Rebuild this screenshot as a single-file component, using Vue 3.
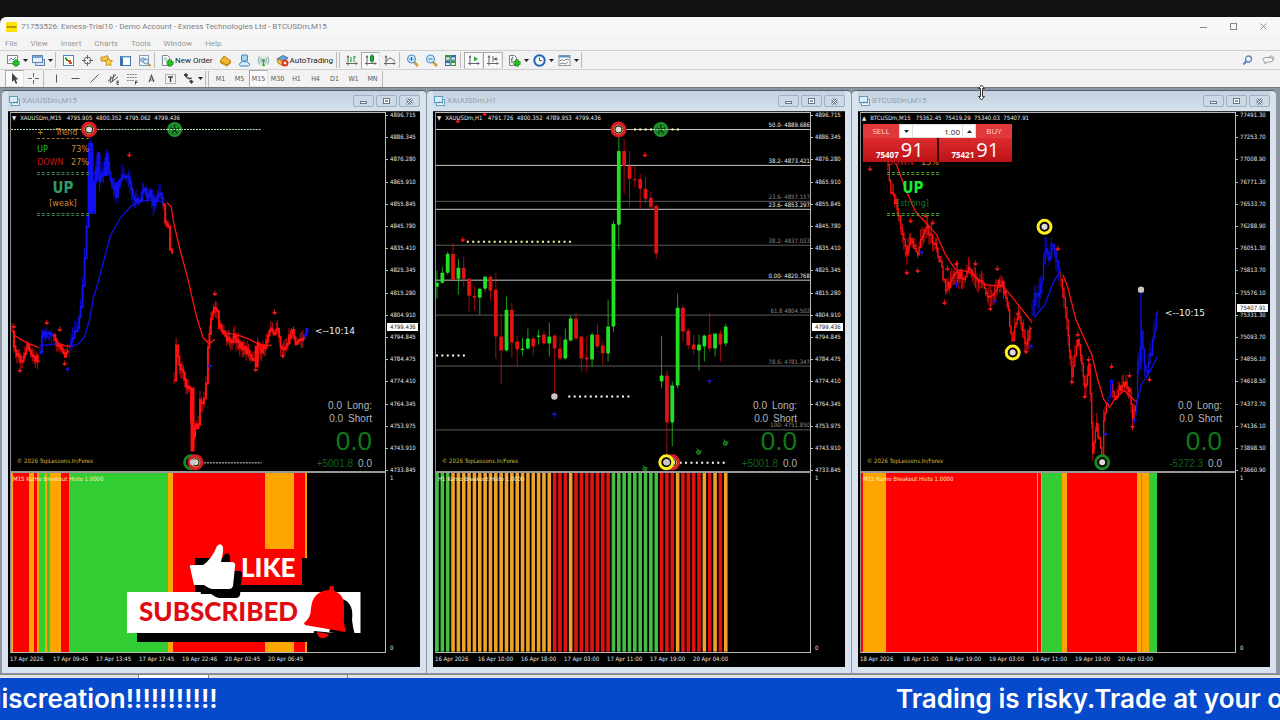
<script setup>
const menus = ['File', 'View', 'Insert', 'Charts', 'Tools', 'Window', 'Help']

const chartAxes = '<path d="M3 2v9.500M1 9.500h11" stroke="#666" fill="none"/><path d="M3 1l-1.500 2.500h3zM13 9.500l-2.500-1.500v3z" fill="#666"/>'
const plus = '<path d="M9 5.500v7M5.500 9h7" stroke="#0c840c" stroke-width="3.500"/><path d="M9 6v6M6 9h6" stroke="#25c225" stroke-width="2"/>'
const icons = {
  newChart: '<rect x=".5" y="1.500" width="10" height="8" fill="#fff" stroke="#7a8794"/><path d="M2 7l2-3 2 2 3-3" stroke="#5f8cc0" fill="none"/>' + plus,
  profiles: '<rect x="3.500" y="5.500" width="9" height="6" fill="#d5e4f4" stroke="#5c84ad"/><rect x=".5" y="1.500" width="10" height="7" fill="#e8f1fa" stroke="#5c84ad"/><path d="M1 3h9" stroke="#76a5d8" stroke-width="2"/>',
  market: '<rect x="1.500" y="1.500" width="10" height="10" fill="#fff" stroke="#4b86bd"/><path d="M3 4.500h2M4 6h2" stroke="#1ba01b" stroke-width="2"/><path d="M6 7h3M7 9h3" stroke="#d34c28" stroke-width="2"/>',
  target: '<circle cx="6.500" cy="6.500" r="3.500" fill="none" stroke="#666"/><path d="M6.500 1v4M6.500 8v4M1 6.500h4M8 6.500h4" stroke="#666"/>',
  navigator: '<path d="M1 3h3l1-1h3v5H1z" fill="#f3c64c" stroke="#c98f1b"/><path d="M8.500 4l1.200 2.500 2.800.3-2 2 .5 3-2.500-1.300L6 11.800l.5-3-2-2 2.800-.3z" fill="#ffd650" stroke="#c98f1b"/>',
  terminal: '<rect x="1.500" y="2.500" width="10" height="9" fill="#fff" stroke="#3b74ad"/><path d="M3 3v8" stroke="#3b74ad" stroke-width="2"/><path d="M2 3h9" stroke="#7fa9d4"/>',
  tester: '<rect x="1.500" y="1.500" width="9" height="10" fill="#f5f9fd" stroke="#7b9cbf"/><path d="M3 8V4M5 9V3M7 7V4" stroke="#4c7fb3"/><circle cx="8" cy="7.500" r="2.500" fill="#d8ecfa" stroke="#6c8cab"/><path d="M10 9.500l2.500 2.500" stroke="#c09a3a" stroke-width="2"/>',
  order: '<path d="M1.500 1.500h5l2 2v8h-7z" fill="#fff" stroke="#7a8794"/><path d="M3 4h3M3 6h4" stroke="#8aa"/>' + plus,
  editor: '<path d="M1 7l4-5 7 5-4 4z" fill="#f0b72f" stroke="#b27c14"/><path d="M1 7l7 4 4-4v2l-4 3.500L1 9z" fill="#c98c1d"/>',
  vps: '<rect x="3.500" y="1" width="6" height="6" rx="1" fill="#a9d6f6" stroke="#3b84c4"/><path d="M2.500 12c-2-.5-1.500-3 .5-3 .5-2 3-2 4-1 2-1 3 0 3 1 2 0 2 2.500.5 3z" fill="#d9edfb" stroke="#3b84c4"/>',
  signal: '<circle cx="6.500" cy="6.500" r="5" fill="#dceedd"/><circle cx="6.500" cy="6.500" r="1.500" fill="#4a8a4a"/><path d="M4.500 4q-2 2.500 0 5M8.500 4q2 2.500 0 5M2.500 2.500q-3 4 0 8M10.500 2.500q3 4 0 8" stroke="#7ba7b5" fill="none"/><path d="M6.500 7l-1.500 5h3z" fill="#39a339"/>',
  auto: '<path d="M1 5l6-3.500L12 4 7 7z" fill="#64a7dd" stroke="#39759f"/><path d="M1 5l6 2v5L2 9z" fill="#f0c049" stroke="#b98b1e"/><circle cx="9" cy="9" r="3.500" fill="#d83b22"/><rect x="7.800" y="7.800" width="2.400" height="2.400" fill="#fff"/>',
  bars: chartAxes + '<path d="M6 3v5M6 7H5M9 2v6M9 3h2" stroke="#18a03a" fill="none"/>',
  candle: chartAxes + '<path d="M8 0v9" stroke="#14802c"/><rect x="6.500" y="2" width="3" height="5" fill="#1fae3b" stroke="#14802c"/>',
  line: chartAxes + '<path d="M3 8q3-5 4.500-4T12 7" stroke="#666" fill="none"/>',
  zoomIn: '<path d="M8 8l4 4" stroke="#cda233" stroke-width="2.500"/><circle cx="5.500" cy="5" r="4" fill="#d3eafa" stroke="#3b88c4"/><path d="M5.500 3v4M3.500 5h4" stroke="#2a74b0"/>',
  zoomOut: '<path d="M8 8l4 4" stroke="#cda233" stroke-width="2.500"/><circle cx="5.500" cy="5" r="4" fill="#d3eafa" stroke="#3b88c4"/><path d="M3.500 5h4" stroke="#2a74b0"/>',
  tile: '<rect x="1" y="1" width="5.500" height="5.500" fill="#3a9a35"/><rect x="6.500" y="1" width="5.500" height="5.500" fill="#2d6db5"/><rect x="1" y="6.500" width="5.500" height="5.500" fill="#2d6db5"/><rect x="6.500" y="6.500" width="5.500" height="5.500" fill="#3a9a35"/><path d="M2 4.500h3.500M7.500 4.500H11M2 10h3.500M7.500 10H11" stroke="#e8f4e8" stroke-width="2"/>',
  scroll: chartAxes + '<path d="M7 2.500v5l4-2.500z" fill="#1fae3b"/>',
  shift: chartAxes + '<path d="M7 2v6M12 5H8" stroke="#666"/><path d="M8 5l2.500-2v4z" fill="#666"/>',
  indicators: '<path d="M1.500 1.500h5l2 2v8h-7z" fill="#e9f3e9" stroke="#7a8794"/><path d="M5 3q-2 1-1 6" stroke="#555" fill="none"/>' + plus,
  clock: '<circle cx="6.500" cy="6.500" r="5.200" fill="#f4f8fc" stroke="#2465b3" stroke-width="2"/><path d="M6.500 3.500v3H9" stroke="#555" fill="none"/>',
  template: '<rect x="1" y="1.500" width="11" height="10" fill="#fff" stroke="#8b98a6"/><path d="M1 2.500h11" stroke="#5f8cc0" stroke-width="2"/><path d="M2 7l2-1.500L6 7l2-2 3 1M2 10l2-1 3 1 3-2" stroke="#77838c" fill="none"/>',
  cursor: '<path d="M4 1v9l2.200-2 1.600 4 1.500-.7L7.700 7.500H10.500z" fill="#444"/>',
  cross: '<path d="M6.500 1v4M6.500 8v4M1 6.500h4M8 6.500h4" stroke="#666"/>',
  vline: '<path d="M6.500 2.500v8" stroke="#555"/>',
  hline: '<path d="M2.500 6.500h8" stroke="#555"/>',
  trend: '<path d="M2.500 10.500l8-8" stroke="#555"/>',
  channel: '<path d="M1 9l8-6M3 11l8-6M4 4l-1 6M7 2L5 10" stroke="#555"/><path d="M12 9h-2v3.500h2M10 10.500h2" stroke="#555" fill="none"/>',
  fibo: '<path d="M1 2.500h10M1 5.500h10M1 8.500h7" stroke="#888" stroke-dasharray="2 .6"/><path d="M11.500 9h-2v3.500M9.500 10.500h2" stroke="#555" fill="none"/>',
  textA: '<path d="M4 10l2.500-6.500L9 10M5 8h3" stroke="#555" stroke-width="1.200" fill="none"/>',
  label: '<rect x="1.500" y="2.500" width="10" height="9" fill="none" stroke="#777" stroke-dasharray="1 1"/><path d="M4 5h5M6.500 5v5" stroke="#444" stroke-width="1.500"/>',
  shapes: '<path d="M2 3l2-1.500L6 3 4 5zM4 5l3 2 3-1" stroke="#444" fill="#444"/><path d="M7 9.500l2-2 2.500 2L9.500 12z" fill="#444"/>',
  search: '<circle cx="7.500" cy="5" r="3" fill="none" stroke="#5b86c8" stroke-width="1.300"/><path d="M5.500 7L2.500 10.500" stroke="#5b86c8" stroke-width="2"/>',
  chat: '<path d="M1 5.500q0-2 3-2h4q3 0 3 2.200T8 8H5L3 10V8Q1 7.500 1 5.500z" fill="#f5f5f5" stroke="#999"/><path d="M7 3q2-2 4-.5t0 4" fill="none" stroke="#aaa"/>',
  child: '<rect x="3.500" y="4.500" width="8" height="6" fill="#eef5fb" stroke="#5f9cc0"/><rect x="1.500" y="1.500" width="8" height="6" fill="#dcecf8" stroke="#5f9cc0"/><path d="M5 7.500h2M8 7.500h2" stroke="#3f86b0" stroke-width="1.500"/>',
}

const toolbar = [
  { icon: 'newChart', drop: true, name: 'New chart' }, { icon: 'profiles', drop: true, name: 'Profiles' }, { sep: 1 },
  { icon: 'market', name: 'Market watch' }, { icon: 'target', name: 'Data window' }, { icon: 'navigator', name: 'Navigator' },
  { icon: 'terminal', name: 'Terminal' }, { icon: 'tester', name: 'Strategy tester' }, { sep: 1 },
  { icon: 'order', label: 'New Order', name: 'New Order' },
  { icon: 'editor', name: 'MetaEditor' }, { icon: 'vps', name: 'VPS' }, { icon: 'signal', name: 'Signals' },
  { icon: 'auto', label: 'AutoTrading', name: 'AutoTrading' }, { sep: 2 },
  { icon: 'bars', name: 'Bar chart' }, { icon: 'candle', on: true, name: 'Candlesticks' }, { icon: 'line', name: 'Line chart' }, { sep: 1 },
  { icon: 'zoomIn', name: 'Zoom in' }, { icon: 'zoomOut', name: 'Zoom out' }, { icon: 'tile', name: 'Tile windows' }, { sep: 1 },
  { icon: 'scroll', on: true, name: 'Auto scroll' }, { icon: 'shift', on: true, name: 'Chart shift' }, { sep: 1 },
  { icon: 'indicators', drop: true, name: 'Indicators' }, { icon: 'clock', drop: true, name: 'Periods' }, { icon: 'template', drop: true, name: 'Templates' }, { sep: 1 },
]
const drawTools = [
  { icon: 'cursor', on: true, name: 'Cursor' }, { icon: 'cross', name: 'Crosshair' }, { sep: 1 },
  { icon: 'vline', name: 'Vertical line' }, { icon: 'hline', name: 'Horizontal line' }, { icon: 'trend', name: 'Trendline' },
  { icon: 'channel', name: 'Channel' }, { icon: 'fibo', name: 'Fibonacci' }, { icon: 'textA', name: 'Text' },
  { icon: 'label', name: 'Text label' }, { icon: 'shapes', drop: true, name: 'Arrows' }, { sep: 2 },
  { text: 'M1' }, { text: 'M5' }, { text: 'M15', on: true }, { text: 'M30' }, { text: 'H1' }, { text: 'H4' },
  { text: 'D1' }, { text: 'W1' }, { text: 'MN' }, { sep: 1 },
]

const RED = '#f11', BLUE = '#1010f0', GREEN = '#22e022', CRED = '#e01212'

// Expands key points into stepped closes plus deterministic wicks.
function series(color, pts, amp, width = 2, step = 1.35) {
  let d = '', wicks = '', k = 0
  for (let i = 0; i < pts.length - 1; i++) {
    const [x0, y0] = pts[i], [x1, y1] = pts[i + 1]
    const n = Math.max(1, Math.round((x1 - x0) / step))
    for (let j = 0; j < n; j++) {
      const t = j / n
      const x = x0 + (x1 - x0) * t
      const noise = Math.sin((x + k) * 12.9) * amp * 0.35
      const y = y0 + (y1 - y0) * t + noise
      d += d ? `H${x.toFixed(1)}V${y.toFixed(1)}` : `M${x.toFixed(1)} ${y.toFixed(1)}`
      const up = Math.abs(Math.sin(k * 7.3 + x)) * amp, down = Math.abs(Math.cos(k * 5.1 + x)) * amp
      wicks += `M${x.toFixed(1)} ${(y - up).toFixed(1)}V${(y + down).toFixed(1)}`
      k++
    }
  }
  const last = pts[pts.length - 1]
  d += `H${last[0]}V${last[1]}`
  return { color, d, wicks, width }
}
const curve = (color, points, width = 1.3) => ({ color, points, width })

const candleData = [
  [271,283,287,299,1],[267,273,283,284,1],[252,254,273,275,1],[243,254,280,281,0],[259,268,279,295,1],[257,268,279,287,0],
  [278,279,296,312,0],[286,296,298,311,0],[288,289,298,315,1],[276,277,289,292,1],[275,277,291,301,0],[273,290,337,359,0],
  [314,337,351,385,0],[297,310,351,352,1],[303,310,343,358,0],[336,342,350,367,0],[338,349,350,356,1],[329,339,349,350,1],
  [337,339,347,356,0],[330,336,337,345,1],[331,335,344,345,0],[323,337,344,357,1],[335,336,349,395,0],[337,349,359,361,0],
  [329,340,359,360,1],[316,319,341,342,1],[313,319,339,341,0],[337,337,359,372,0],[337,358,360,372,0],[333,335,360,367,1],
  [324,335,347,349,0],[341,346,354,365,0],[300,327,354,362,1],[221,224,327,332,1],[137,151,225,250,1],[139,151,166,194,0],
  [151,166,179,207,0],[166,179,180,188,0],[174,179,189,209,0],[177,189,199,204,0],[192,198,207,210,0],[205,206,254,259,0],
  [336,376,382,389,1],[371,376,423,457,0],[382,386,423,447,1],[294,308,386,389,1],[306,308,332,342,0],[329,331,346,350,0],
  [335,345,350,355,0],[335,345,351,371,1],[335,336,347,362,1],[313,335,349,353,0],[334,334,349,357,1],[330,334,345,362,0],[324,327,344,347,1],
]
const pitch = 5.376
const candles = candleData.map(([hi, top, bot, lo, up], i) => ({ x: 436 + i * pitch, hi, top, bot, lo, color: up ? GREEN : CRED }))
const hourCodes = 'GGG' + 'O'.repeat(19) + 'RRRO' + 'R'.repeat(7) + 'G'.repeat(9) + 'RRRORRRRORORO'
const hourColors = { G: '#43bf43', O: '#eea22c', R: '#e01212' }
const hourBars = [...hourCodes].map((c, i) => [434.2 + i * pitch, 437.8 + i * pitch, hourColors[c]])

const O = '#ffa500', G = '#32cd32', R = '#ff0000'
const goldScale = ['4896.715','4886.345','4876.280','4865.910','4855.845','4845.780','4835.410','4825.345','4815.280','4804.910','4794.845','4784.475','4774.410','4764.345','4753.975','4743.910','4733.845']
const btcScale = ['77491.30','77253.70','77008.90','76771.30','76533.70','76288.90','76051.30','75813.70','75576.10','75331.30','75093.70','74856.10','74618.50','74373.70','74136.10','73898.50','73660.90']

const charts = [
  {
    id: 'gold15', title: 'XAUUSDm,M15', x0: 10, arrow: '▼', info: 'XAUUSDm,M15   4795.905  4800.352  4795.062  4799.436',
    scale: goldScale, price: '4799.436', histo: 'M15 Kumo Breakout Histo 1.0000', profit: '+5001.8', timer: '<--10:14', timerClass: 'timer-gold',
    dates: ['17 Apr 2026','17 Apr 09:45','17 Apr 13:45','17 Apr 17:45','19 Apr 22:46','20 Apr 02:45','20 Apr 06:45'],
    bars: [[10,12,O],[12,28,R],[28,33,O],[33,36,R],[36,38,O],[38,44,G],[44,46,O],[46,49,G],[49,60,O],[60,68,R],[68,168,G],[168,173,O],[173,265,R],[265,295,O],[295,306,R],[306,308,O]],
    series: [
      series(RED, [[11,333],[13,350],[16,356],[20,360],[24,357],[27,345],[30,352],[33,358],[38,361]], 8),
      series(BLUE, [[39,352],[41,334],[46,336],[52,334]], 8),
      series(RED, [[53,338],[56,344],[59,344],[63,356],[68,352]], 7),
      series(BLUE, [[69,350],[72,340],[74,330],[77,325],[80,310],[82,290],[84,260],[86,225],[88,160],[90,148],[92,210],[94,186],[97,155],[99,178],[103,176],[106,158],[110,176],[116,196],[118,190],[122,172],[128,182],[134,196],[138,205],[142,192],[150,195],[153,204],[160,197],[163,206]], 11),
      series(RED, [[163,206],[165,224],[168,226],[170,248],[172,254]], 5),
      series(RED, [[174,378],[176,344],[178,358],[182,372],[186,384],[190,392],[191,424],[192,448],[195,426],[198,424],[200,402],[204,400],[206,382],[208,345],[211,320],[214,311],[217,310],[219,325],[224,335],[227,342],[231,340],[235,338],[240,345],[245,350],[250,353],[256,364],[258,346],[262,350],[267,345],[270,332],[278,332],[281,348],[287,345],[292,333],[296,342],[302,343],[305,335]], 9),
      series(BLUE, [[305,334],[307,328],[308,334]], 4),
    ],
    curves: [curve(BLUE, '90,143 90,214', 5), curve(BLUE, '94,184 94,214', 3), curve(BLUE, '98,152 98,180', 3), curve(BLUE, '106,157 106,176', 4), curve(BLUE, '116.500,182 116.500,198', 4), curve(RED, '192.500,388 192.500,452', 4), curve(RED, '197,424 197,430', 5), curve(RED, '257,346 257,368', 4), curve(RED, '14,336 20,340 28,344 38,348'), curve(BLUE, '39,346 50,345 56,344'), curve(RED, '56,343 64,346 70,347'), curve(BLUE, '71,347 78,344 84,337 89,320 93,298 97,285 103,262 110,236 120,218 130,207 138,202 150,200 162,202'), curve(RED, '167,203 171,207 174,225 180,250 188,280 196,315 203,338 209,344 215,340'), curve(RED, '224,333 240,336 250,340 260,345 272,346')],
    red: [[13,327],[46,323],[59,330],[19,371],[64,364],[129,155],[215,294],[275,313],[294,330],[283,356],[256,370]],
    blue: [[67,370],[210,367],[41,352]],
    dots: [[10,262,129.5,'#bfe6bf','2 1'],[198,262,463.5,'#ddd','2 1']],
    rings: [[88.5,129.5,'red'],[191,463,'green'],[195.500,463,'red']], pearls: [[193,463]], wheels: [[174.5,129.5]], leaves: [],
  },
  {
    id: 'gold60', title: 'XAUUSDm,H1', x0: 435, arrow: '▼', info: 'XAUUSDm,H1   4791.726  4800.352  4789.953  4799.436',
    scale: goldScale, price: '4799.436', histo: 'H1 Kumo Breakout Histo 1.0000', profit: '+5001.8',
    dates: ['16 Apr 2026','16 Apr 10:00','16 Apr 18:00','17 Apr 03:00','17 Apr 11:00','17 Apr 19:00','20 Apr 04:00'],
    bars: hourBars, series: [], curves: [], candles,
    fibs: [[129,'50.0- 4889.686',1],[165,'38.2- 4873.421',1],[201,'23.6- 4857.157',0],[209,'23.6- 4853.297',1],[245,'38.2- 4837.033',0],[280,'0.00- 4820.768',1],[315,'61.8 4804.503',0],[366,'78.6- 4781.347',0],[430,'100- 4751.850',0]],
    red: [[457,121],[484,114],[462,240],[645,155]], blue: [[554,415],[710,382]],
    dots: [[466,572,242,'#ffffa0','2 3.4'],[435,464,356,'#fff','2 3.4'],[568,632,397,'#fff','2 3.4'],[634,680,129.5,'#ffffd0','2 3.4'],[680,728,463.5,'#fff','2 3.4']],
    rings: [[618.5,129.5,'red'],[672.500,463,'red'],[666.500,463,'yellow']], pearls: [[554,397],[667,463]], wheels: [[661,129.5]], leaves: [[726,443],[699,452],[645,469]],
  },
  {
    id: 'btc', title: 'BTCUSDm,M15', x0: 860, arrow: '▲', info: 'BTCUSDm,M15   75362.45  75419.29  75340.03  75407.91',
    scale: btcScale, price: '75407.91', histo: 'M15 Kumo Breakout Histo 1.0000', profit: '-5272.3', timer: '<--10:15', timerClass: 'timer-btc', trade: true,
    dates: ['18 Apr 2026','18 Apr 11:00','18 Apr 19:00','19 Apr 03:00','19 Apr 11:00','19 Apr 19:00','20 Apr 03:00'],
    bars: [[860,862,R],[862,885,O],[885,1037,R],[1037,1038,O],[1038,1041,R],[1041,1042,O],[1042,1062,G],[1062,1067,O],[1067,1137,R],[1137,1141,O],[1141,1142,G],[1142,1150,O],[1150,1158,G]],
    series: [
      series(RED, [[887,163],[890,190],[895,203],[900,225],[906,258],[910,235],[917,258],[920,237],[927,230],[932,240],[940,262],[945,290],[950,283],[957,274],[962,278],[968,270],[978,282],[984,288],[990,298],[997,284],[1002,285],[1007,303],[1012,344],[1017,317],[1021,323],[1026,346],[1031,328]], 11, 1.3),
      series(BLUE, [[1032,320],[1034,303],[1038,292],[1042,285],[1045,253],[1049,256],[1053,250],[1056,262],[1060,275]], 15, 1.3),
      series(RED, [[1061,277],[1064,300],[1067,323],[1072,374],[1078,343],[1082,360],[1085,388],[1089,367],[1092,420],[1093,450],[1097,427],[1102,455],[1104,417],[1108,403]], 11, 1.3),
      series(BLUE, [[1109,400],[1111,380],[1113,392]], 10, 1.3),
      series(RED, [[1113,390],[1116,397],[1120,390],[1125,383],[1130,393],[1133,422],[1137,400]], 10, 1.3),
      series(BLUE, [[1137,400],[1138,370],[1142,335],[1145,364],[1148,370],[1153,345],[1158,311]], 13, 1.3),
    ],
    curves: [curve(RED, '895,163 905,190 915,212 928,226 936,235 945,255 955,270 968,272 985,285 1003,287 1010,295 1022,310 1032,323'), curve(BLUE, '1034,318 1045,305 1053,283 1058,275'), curve(RED, '1063,275 1068,288 1076,320 1085,340 1092,355 1098,380 1104,400 1110,408 1116,398 1125,391 1136,402'), curve(BLUE, '1138,400 1142,385 1150,373 1158,357'), curve(BLUE, '1141.500,293 1141.500,370')],
    red: [[869,169],[910,221],[925,216],[932,223],[906,273],[917,271],[947,269],[956,264],[975,264],[997,269],[944,303],[990,309],[1018,314],[1058,249],[1026,352],[1078,335],[1089,360],[1072,382],[1085,397],[1112,367],[1130,376],[1150,380],[1133,427]],
    blue: [[921,253],[956,285],[995,302],[1031,347],[1106,435],[1135,421]],
    dots: [], rings: [[1044.500,227,'yellow'],[1012.500,353,'yellow'],[1102.500,463,'green']], pearls: [[1141.500,290]], wheels: [], leaves: [],
  },
]
const ringColor = { red: '#e0182c', yellow: '#fff01e', green: '#168a1e' }
const message = 'Trading is risky.Trade at your own discreation!!!!!!!!!!!'
</script>

<template>
  <div class="screen">
    <header class="titlebar">
      <span class="logo">exness</span>
      <h1>71753526: Exness-Trial10 - Demo Account - Exness Technologies Ltd - BTCUSDm,M15</h1>
      <div class="caption">
        <button aria-label="Minimize"><svg width="8" height="8"><path d="M0 4.500h7" stroke="#888" /></svg></button>
        <button aria-label="Maximize"><svg width="8" height="8"><rect x=".5" y=".5" width="6" height="6" fill="none" stroke="#888" /></svg></button>
        <button aria-label="Close"><svg width="8" height="8"><path d="M.5.5l6 6M6.500.5l-6 6" stroke="#888" /></svg></button>
      </div>
    </header>
    <nav class="menu"><button v-for="m in menus" :key="m">{{ m }}</button></nav>

    <div v-for="(row, r) in [toolbar, drawTools]" :key="r" class="toolbar" role="toolbar">
      <template v-for="(t, i) in row" :key="i">
        <span v-if="t.sep" class="sep" :class="{ double: t.sep === 2 }"></span>
        <button v-else class="tool" :class="{ on: t.on, drop: t.drop, labelled: t.label }" :aria-label="t.name || t.text">
          <svg v-if="t.icon" width="13" height="13" viewBox="0 0 13 13" v-html="icons[t.icon]"></svg>
          <span v-if="t.label">{{ t.label }}</span>
          <span v-if="t.text" class="period">{{ t.text }}</span>
          <svg v-if="t.drop" class="caret" width="5" height="3"><path d="M0 0h5l-2.500 3z" fill="#222" /></svg>
        </button>
      </template>
      <div v-if="r === 0" class="right-tools">
        <button aria-label="Search"><svg width="13" height="13" v-html="icons.search"></svg></button>
        <button aria-label="Chat"><svg width="13" height="13" v-html="icons.chat"></svg></button>
      </div>
    </div>

    <main class="desk">
      <section v-for="c in charts" :key="c.id" class="win">
        <header class="win-title">
          <svg width="13" height="13" v-html="icons.child"></svg>
          <h2>{{ c.title }}</h2>
          <div class="win-buttons">
            <button aria-label="Minimize"><svg width="9" height="7"><rect x="1.500" y="3.500" width="6" height="2" fill="#fff" stroke="#6a7686" /></svg></button>
            <button aria-label="Restore"><svg width="9" height="7"><rect x="1.500" y=".5" width="6" height="5" fill="#fff" stroke="#6a7686" /><path d="M3 3h3" stroke="#6a7686" stroke-width="1.500" /></svg></button>
            <button aria-label="Close"><svg width="9" height="7"><path d="M2 1l5 5M7 1L2 6" stroke="#6a7686" stroke-width="2.500" /><path d="M2 1l5 5M7 1L2 6" stroke="#fff" /></svg></button>
          </div>
        </header>

        <div class="chart">
          <div class="plot">
            <svg class="canvas" :viewBox="`${c.x0} 113 376 359`" preserveAspectRatio="none">
              <template v-if="c.fibs">
                <path v-for="f in c.fibs" :key="f[0]" :d="`M${c.x0} ${f[0] + 0.5}h376`" :stroke="f[2] ? '#c8c8c8' : '#5c5c5c'" />
              </template>
              <g v-for="(s, i) in c.series" :key="'s' + i" :stroke="s.color" fill="none">
                <path :d="s.wicks" stroke-width="1" opacity=".75" />
                <path :d="s.d" :stroke-width="s.width" />
              </g>
              <polyline v-for="(m, i) in c.curves" :key="'m' + i" :points="m.points" :stroke="m.color" :stroke-width="m.width" fill="none" />
              <g v-for="(k, i) in c.candles || []" :key="'k' + i">
                <path :d="`M${k.x} ${k.hi}V${k.lo}`" :stroke="k.color" opacity=".7" />
                <rect :x="k.x - 1.9" :y="k.top" width="3.800" :height="Math.max(1.5, k.bot - k.top)" rx=".8" :fill="k.color" />
              </g>
              <path v-for="(d, i) in c.dots" :key="'d' + i" :d="`M${d[0]} ${d[2]}H${d[1]}`" :stroke="d[3]" :stroke-dasharray="d[4]" :stroke-width="d[4] === '2 1' ? 1 : 2" />
              <path v-for="(p, i) in c.red" :key="'r' + i" :d="`M${p[0]} ${p[1] - 3}v3M${p[0] - 2} ${p[1]}h4l-2 2z`" stroke="#f01818" fill="#f01818" />
              <path v-for="(p, i) in c.blue" :key="'b' + i" :d="`M${p[0]} ${p[1] + 3}v-3M${p[0] - 2} ${p[1]}h4l-2 -2z`" stroke="#1414d8" fill="#1414d8" />
              <g v-for="(w, i) in c.wheels" :key="'w' + i" :transform="`translate(${w[0]} ${w[1]})`" fill="none">
                <circle r="7.500" fill="#22952f" />
                <path d="M0-5V0M0 0l5-1.500M0 0l3 4.500M0 0l-3 4.500M0 0l-5-1.500" stroke="#063d0b" stroke-width="1.500" />
                <circle r="5" stroke="#176f21" />
                <path d="M-7.500 0h15" stroke="#bfe6bf" stroke-dasharray="2 1" />
              </g>
              <g v-for="(g, i) in c.rings" :key="'g' + i" :transform="`translate(${g[0]} ${g[1]})`">
                <circle r="6.500" fill="#080808" :stroke="ringColor[g[2]]" stroke-width="3" />
                <circle v-if="g[2] !== 'yellow'" r="4.500" fill="none" :stroke="g[2] === 'red' ? '#f0b040' : '#111'" />
                <circle r="3" fill="#ded8dc" />
              </g>
              <circle v-for="(p, i) in c.pearls" :key="'p' + i" :cx="p[0]" :cy="p[1]" r="3.200" fill="#ccc4c4" />
              <g v-for="(l, i) in c.leaves" :key="'l' + i" :transform="`translate(${l[0]} ${l[1]})`" fill="#0b5a15" stroke="#139a25">
                <circle cy="1" r="2" /><path d="M-2-3L0-1M1 1l2-2" />
              </g>
            </svg>

            <p class="info"><span>{{ c.arrow }}</span>{{ c.info }}</p>
            <template v-if="c.fibs">
              <span v-for="f in c.fibs" :key="f[1]" class="fib" :class="{ dim: !f[2] }" :style="{ top: (f[0] - 121) / 3.59 + '%' }">{{ f[1] }}</span>
            </template>

            <div v-if="c.id !== 'gold60'" class="trend" :class="{ strong: c.trade }">
              <template v-if="!c.trade">
                <div class="row head"><span>+</span><span>Trend</span><span></span></div>
                <hr />
                <div class="row"><span class="up">UP</span><span>73%</span></div>
              </template>
              <div class="row"><span class="down">DOWN</span><span>{{ c.trade ? '13%' : '27%' }}</span></div>
              <hr class="twin" />
              <strong>UP</strong>
              <em>{{ c.trade ? '[strong]' : '[weak]' }}</em>
              <hr class="twin" />
            </div>

            <form v-if="c.trade" class="trade" @submit.prevent>
              <button type="button" class="side">SELL</button>
              <div class="volume">
                <button type="button" aria-label="Decrease"><svg width="5" height="3"><path d="M0 0h5l-2.500 3z" fill="#222" /></svg></button>
                <input aria-label="Volume" value="1.00" />
                <button type="button" aria-label="Increase"><svg width="5" height="3"><path d="M0 3h5l-2.500-3z" fill="#222" /></svg></button>
              </div>
              <button type="button" class="side">BUY</button>
              <div class="quotes">
                <button type="button">75407<b>91</b></button>
                <button type="button">75421<b>91</b></button>
              </div>
            </form>

            <span v-if="c.timer" class="timer" :class="c.timerClass">{{ c.timer }}</span>
            <span class="credit">© 2026 TopLessons.In/Forex</span>
            <div class="totals">
              <p>0.0&ensp;Long:</p>
              <p>0.0&ensp;Short</p>
              <p class="big">0.0</p>
              <p><span class="profit">{{ c.profit }}</span>&ensp;0.0</p>
            </div>
          </div>
          <div class="scale">
            <span v-for="s in c.scale" :key="s">{{ s }}</span>
            <b :class="{ btc: c.trade }">{{ c.price }}</b>
          </div>

          <div class="histo">
            <svg class="canvas" :viewBox="`${c.x0} 474 376 179`" preserveAspectRatio="none" :shape-rendering="c.candles ? 'auto' : 'crispEdges'">
              <rect v-for="(b, i) in c.bars" :key="i" :x="b[0]" y="474" :width="b[1] - b[0]" height="179" :fill="b[2]" />
            </svg>
            <p>{{ c.histo }}</p>
          </div>
          <div class="scale small"><span>1</span><span>0</span></div>
          <div class="dates"><span v-for="d in c.dates" :key="d">{{ d }}</span></div>
        </div>
      </section>
    </main>

    <div class="tabs"><i></i><i class="active"></i><i></i></div>
    <footer class="ticker">
      <div class="leaving"><span>{{ message }}</span></div>
      <div class="entering"><span>{{ message }}</span></div>
    </footer>

    <aside class="promo">
      <svg width="240" height="100" viewBox="127 543 240 100">
        <path d="M195 558h114v34H195z" fill="#000" />
        <path d="M230 549h72v36H195v-15h35z" fill="#f00" />
        <path d="M137 601h217v41H137z" fill="#000" />
        <path d="M127 592h233.500v41H127z" fill="#fff" />
        <path transform="translate(7 9)" d="M190 567q-1-2 2-2h11q9-6 14-19 4-4 6 1v5l-2 10h12q3 1 2 5l-2 19q-1 3-4 3h-17q-4-1-8-4h-10z" fill="#000" />
        <path d="M190 567q-1-2 2-2h11q9-6 14-19 4-4 6 1v5l-2 10h12q3 1 2 5l-2 19q-1 3-4 3h-17q-4-1-8-4h-10z" fill="#fff" />
        <path d="M335 600q11-4 16 7 2 5 1 13 1 9 3 15l-41-4q-2 5 4 9 5 2 10-1l1-5z" fill="#000" />
        <path d="M329 590l1-4q2-1 4 1v4q10 3 10 14v13q-1 5 2 12l-1 2-40-7-1-2q7-5 7-15 2-17 18-18z" fill="#f00" />
        <path d="M317 632l12 2q-3 5-8 4-4-2-4-6z" fill="#f00" />
      </svg>
      <span class="like">LIKE</span>
      <span class="subscribed">SUBSCRIBED</span>
    </aside>
    <svg class="pointer" width="9" height="17" viewBox="0 0 9 17"><path d="M4.500 1l3 3.500h-2v8h2l-3 3.500-3-3.500h2v-8h-2z" fill="#fff" stroke="#333" /></svg>
  </div>
</template>

<style>
html, body { margin: 0; background: #111; }
#app { height: 100vh; }
</style>

<style scoped>
.screen { position: relative; display: flex; flex-direction: column; height: 100vh; box-sizing: border-box; padding-top: 17px; overflow: hidden; background: #111; font-family: Roboto, "Noto Sans", sans-serif; font-size: 8px; color: #333; }
* { box-sizing: border-box; }
button { border: 0; padding: 0; background: none; font: inherit; color: inherit; }
p, h1, h2 { margin: 0; font-weight: 400; }
svg { display: block; flex: none; }

.titlebar { display: flex; align-items: center; gap: 4px; height: 20px; padding: 0 6px; background: #f7f7f7; border-radius: 6px 0 0 0; }
.logo { width: 11px; height: 10px; border-radius: 1px; background: #ffe000; color: #333; font-size: 3px; line-height: 10px; text-align: center; }
h1 { font-size: 8px; line-height: 12px; color: #808080; }
.caption { display: flex; gap: 22px; margin-left: auto; padding-right: 6px; }
.menu { display: flex; gap: 13px; height: 13px; padding: 0 5px; background: #f4f4f4; color: #989898; line-height: 13px; }

.toolbar { display: flex; align-items: center; height: 19px; padding-left: 5px; border-top: 1px solid #d0d0d0; background: #f2f2f2; }
.toolbar + .toolbar { height: 18px; }
.tool { display: flex; align-items: center; justify-content: center; width: 19px; height: 17px; }
.tool.drop { width: 25px; gap: 3px; justify-content: flex-end; padding-right: 2px; }
.tool.on { border: 1px solid; border-color: #aaa #e4e4e4 #e4e4e4 #aaa; background: #fafafa; }
.tool.labelled { width: auto; padding: 0 3px; gap: 1px; color: #222; font-size: 8px; }
.period { font: 7px "DejaVu Sans Condensed", sans-serif; color: #555; }
.sep { width: 4px; height: 16px; border-left: 1px solid #bbb; }
.sep.double { border-right: 1px solid #bbb; margin-right: 2px; }
.right-tools { display: flex; gap: 8px; margin-left: auto; padding-right: 5px; }

.desk { display: grid; grid-template-columns: repeat(3, minmax(0, 1fr)); gap: 1px; flex: 1; min-height: 0; padding: 2px 4px 1px 2px; border-top: 1px solid #777; background: #8d959e; }
.win { display: flex; flex-direction: column; min-width: 0; padding: 0 6px 6px; border: solid #526170; border-width: 1px 0 0; border-radius: 4px 4px 0 0; background: #d8e3ef; }
.win-title { display: flex; align-items: center; gap: 1px; height: 20px; background: linear-gradient(#c3d1e0, #d5e1ee); }
h2 { font-size: 8px; line-height: 12px; color: #93a0ae; }
.win-buttons { display: flex; gap: 2px; margin-left: auto; }
.win-buttons button { display: grid; place-items: center; width: 21px; height: 12px; border: 1px solid #a1afbf; border-radius: 2px; background: #ccd9e7; }

.chart { display: grid; grid-template-columns: minmax(0, 1fr) 34px; grid-template-rows: minmax(0, 362fr) minmax(0, 180fr) 14px; flex: 1; min-height: 0; padding-left: 2px; background: #000; border-top: 1px solid #333; color: #e6e6e6; font: 6px/10px "DejaVu Sans Condensed", sans-serif; }
.plot, .histo { position: relative; min-width: 0; overflow: hidden; border-right: 1px solid #bbb; }
.plot { border-top: 1px solid #bbb; border-bottom: 2px solid #999; border-left: 1px solid #888; }
.histo { border-bottom: 1px solid #bbb; border-left: 1px solid #888; }
.canvas { position: absolute; inset: 0; width: 100%; height: 100%; }
.info { position: absolute; top: 0; left: 1px; white-space: pre; font-size: 6px; }
.info span { margin-right: 4px; }
.scale { position: relative; display: flex; flex-direction: column; justify-content: space-between; margin: -2px 0; padding-left: 4px; }
.scale span::before { content: ""; position: absolute; left: 0; width: 2px; margin-top: 5px; border-top: 1px solid #bbb; }
.scale b { position: absolute; left: 1px; top: 213px; width: 31px; padding-left: 3px; background: #fff; color: #222; font-weight: 400; line-height: 8px; }
.scale b.btc { top: 194px; }
.scale.small { margin: 0; }
.scale.small span::before { content: none; }
.dates { grid-column: 1 / -1; display: flex; padding-top: 1px; }
.dates span { width: 43px; white-space: nowrap; }
.histo p { position: absolute; top: 1px; left: 2px; color: #f6f0c0; }
.fib { position: absolute; right: 0; color: #eee; line-height: 8px; }
.fib.dim { color: #888; }

.trend { position: absolute; top: 13px; left: 26px; width: 52px; color: #c98a35; font: 9px/13px "DejaVu Sans Condensed", sans-serif; display: flex; flex-direction: column; }
.trend.strong { top: 43px; }
.row { display: flex; justify-content: space-between; }
.row.head { line-height: 12px; }
.trend hr { width: 100%; height: 1px; margin: 0 0 4px; border: 0; border-top: 1px dashed #a06a28; }
.trend hr.twin { height: 3px; margin: 3px 0 0; border-top: 1px dashed #3a7a54; border-bottom: 1px dashed #3a7a54; }
.up { color: #22c03c; }
.down { color: #c01818; }
.trend strong { margin-top: 4px; color: #2f9a66; font: 700 15px/18px "DejaVu Sans Condensed", sans-serif; text-align: center; }
.trend em { font-style: normal; text-align: center; line-height: 13px; }
.strong strong { color: #10f030; }
.strong em { color: #1c7030; }
.strong hr.twin { border-color: #4a9a28; }

.trade { position: absolute; top: 11px; left: 2px; display: grid; grid-template-columns: 36px 77px 36px; width: 149px; background: #400; color: #fff; font: 8px/14px "Open Sans", sans-serif; }
.side { height: 14px; background: #e0393c; color: #ffd8d8; }
.volume { display: flex; padding: 1px; background: #ddd; gap: 1px; }
.volume button { display: grid; place-items: center; width: 12px; background: #fff; }
.volume input { flex: 1; width: 0; min-width: 0; border: 0; padding: 0 2px; text-align: right; font: 8px "Open Sans", sans-serif; color: #222; background: #fff; }
.quotes { grid-column: 1 / -1; display: grid; grid-template-columns: 1fr 1fr; gap: 2px; height: 24px; }
.quotes button { display: flex; align-items: flex-end; justify-content: center; gap: 2px; background: linear-gradient(#dd2b2e, #bb1216); font: 700 8px/14px "Open Sans", sans-serif; color: #fff; }
.quotes b { font-weight: 400; font-size: 20px; line-height: 24px; }

.timer { position: absolute; font: 9px/12px "DejaVu Sans", sans-serif; color: #eee; right: 30px; }
.timer-gold { top: 212px; }
.timer-btc { top: 194px; }
.credit { position: absolute; left: 6px; bottom: 5px; color: #cdbb3c; font: 6px/10px "DejaVu Sans Condensed", sans-serif; }
.totals { position: absolute; right: 13px; bottom: 1px; text-align: right; color: #b4b4bc; font: 10px/13px "Liberation Sans", sans-serif; }
.totals .big { color: #0f7a18; font-size: 26px; line-height: 32px; }
.profit { color: #14601c; }

.tabs { display: flex; height: 4px; background: #e4e4e4; border-top: 1px solid #888; }
.tabs i { width: 139px; border-right: 1px solid #888; }
.tabs i.active { width: 70px; background: #fff; }
.ticker { display: flex; height: 42px; background: #064acb; color: #fff; font: 600 26px/42px Inter, sans-serif; white-space: nowrap; overflow: hidden; }
.leaving { display: flex; justify-content: flex-end; width: 17%; margin-right: 53%; }
.entering { flex: 1; min-width: 0; }

.promo { position: absolute; left: 127px; top: 543px; width: 240px; height: 100px; font-family: "Lato", sans-serif; font-weight: 900; }
.promo span { position: absolute; line-height: 30px; font-size: 26px; }
.like { left: 114px; top: 9px; color: #fff; }
.subscribed { left: 12px; top: 53px; color: #e00b12; }
.pointer { position: absolute; left: 977px; top: 84px; }
</style>
